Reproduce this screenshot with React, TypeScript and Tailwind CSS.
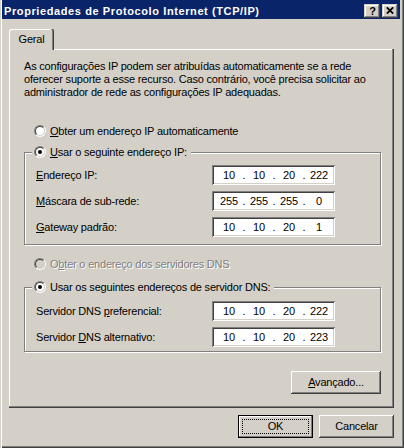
import React, { Fragment } from "react";

function Radio({ checked, disabled }: { checked?: boolean; disabled?: boolean }) {
  return (
    <span className="flex w-[12px] h-[12px] shrink-0 rounded-full border border-t-[#808080] border-l-[#808080] border-r-white border-b-white">
      <span
        className={
          disabled
            ? "flex items-center justify-center w-[10px] h-[10px] rounded-full border border-t-[#404040] border-l-[#404040] border-r-[#d4d0c8] border-b-[#d4d0c8] bg-[#d4d0c8]"
            : "flex items-center justify-center w-[10px] h-[10px] rounded-full border border-t-[#404040] border-l-[#404040] border-r-[#d4d0c8] border-b-[#d4d0c8] bg-white"
        }
      >
        {checked && <span className="w-[4px] h-[4px] rounded-full bg-black" />}
      </span>
    </span>
  );
}

function IpBox({ parts }: { parts: string[] }) {
  return (
    <div className="w-[123px] h-[20px] bg-white flex items-center pl-[5px] shadow-[inset_1px_1px_0_#808080,inset_-1px_-1px_0_#fff,inset_2px_2px_0_#404040,inset_-2px_-2px_0_#d4d0c8]">
      {parts.map((p, i) => (
        <Fragment key={i}>
          {i > 0 && <span className="w-[6px] text-center">.</span>}
          <span className="w-[24px] text-center">{p}</span>
        </Fragment>
      ))}
    </div>
  );
}

function Row({ label, parts }: { label: React.ReactNode; parts: string[] }) {
  return (
    <div className="flex items-center h-[20px]">
      <span className="w-[176px] whitespace-nowrap">{label}</span>
      <IpBox parts={parts} />
    </div>
  );
}

const U = ({ children }: { children: React.ReactNode }) => (
  <span className="underline underline-offset-[1px]">{children}</span>
);

export default function App() {
  return (
    <div className="w-[404px] h-[448px] bg-[#d4d0c8] flex flex-col text-[11px] leading-[13px] text-black tracking-[-0.2px] font-['Liberation_Sans',Arial,sans-serif] shadow-[inset_1px_0_0_#d4d0c8,inset_2px_0_0_#fff,inset_-1px_-1px_0_#404040,inset_-2px_-2px_0_#808080]">
      {/* Title bar */}
      <div className="ml-[2px] mr-[4px] h-[19px] bg-[#0a246a] flex items-start justify-between">
        <span className="pl-[2px] pt-[5px] text-white font-bold tracking-[0.6px] whitespace-nowrap">
          Propriedades de Protocolo Internet (TCP/IP)
        </span>
        <div className="flex gap-[2px] pt-[4px] pr-[2px]">
          <div className="w-[16px] h-[14px] bg-[#d4d0c8] flex items-center justify-center shadow-[inset_-1px_-1px_0_#404040,inset_1px_1px_0_#d4d0c8,inset_-2px_-2px_0_#808080,inset_2px_2px_0_#fff]">
            <span className="font-bold text-[11px] leading-[11px] tracking-normal pl-[1px]">?</span>
          </div>
          <div className="w-[16px] h-[14px] bg-[#d4d0c8] flex items-center justify-center shadow-[inset_-1px_-1px_0_#404040,inset_1px_1px_0_#d4d0c8,inset_-2px_-2px_0_#808080,inset_2px_2px_0_#fff]">
            <svg width="8" height="7" viewBox="0 0 8 7" className="mb-[1px]">
              <path d="M0.8 0.3 L7.2 6.7 M7.2 0.3 L0.8 6.7" stroke="#000" strokeWidth="1.7" fill="none" />
            </svg>
          </div>
        </div>
      </div>

      <div className="flex flex-col pl-[9px] pr-[10px]">
        {/* Tab */}
        <div className="mt-[10px] flex">
          <div className="relative z-10 -mb-[1px] w-[45px] h-[21px] bg-[#d4d0c8] rounded-tl-[2px] rounded-tr-[2px] flex justify-center pt-[4px] shadow-[inset_-1px_0_0_#404040,inset_-2px_0_0_#808080,inset_1px_1px_0_#fff]">
            Geral
          </div>
        </div>

        {/* Panel */}
        <div className="h-[359px] flex flex-col pl-[15px] pt-[11px] shadow-[inset_-1px_-1px_0_#404040,inset_-2px_-2px_0_#808080,inset_1px_1px_0_#fff]">
          <p className="whitespace-nowrap">
            As configurações IP podem ser atribuídas automaticamente se a rede
            <br />
            oferecer suporte a esse recurso. Caso contrário, você precisa solicitar ao
            <br />
            administrador de rede as configurações IP adequadas.
          </p>

          <div className="mt-[25px] ml-[10px] h-[14px] flex items-center gap-[4px]">
            <Radio />
            <span>
              <U>O</U>bter um endereço IP automaticamente
            </span>
          </div>

          <div className="relative mt-[14px] w-[357px] border border-[#808080] shadow-[1px_1px_0_#fff,inset_1px_1px_0_#fff] pl-[11px] pt-[12px] pb-[7px] flex flex-col gap-[6px]">
            <div className="absolute -top-[8px] left-[7px] h-[14px] bg-[#d4d0c8] flex items-center gap-[4px] pl-[2px] pr-[4px]">
              <Radio checked />
              <span>
                <U>U</U>sar o seguinte endereço IP:
              </span>
            </div>
            <Row label={<><U>E</U>ndereço IP:</>} parts={["10", "10", "20", "222"]} />
            <Row label={<><U>M</U>áscara de sub-rede:</>} parts={["255", "255", "255", "0"]} />
            <Row label={<><U>G</U>ateway padrão:</>} parts={["10", "10", "20", "1"]} />
          </div>

          <div className="mt-[12px] ml-[10px] h-[14px] flex items-center gap-[4px]">
            <Radio disabled />
            <span className="text-[#808080] [text-shadow:1px_1px_0_#fff]">
              O<U>b</U>ter o endereço dos servidores DNS
            </span>
          </div>

          <div className="relative mt-[16px] w-[357px] border border-[#808080] shadow-[1px_1px_0_#fff,inset_1px_1px_0_#fff] pl-[11px] pt-[13px] pb-[4px] flex flex-col gap-[6px]">
            <div className="absolute -top-[8px] left-[7px] h-[14px] bg-[#d4d0c8] flex items-center gap-[4px] pl-[2px] pr-[4px]">
              <Radio checked />
              <span>Usar os seguintes endereços de servidor DNS:</span>
            </div>
            <Row label={<>Servidor DNS <U>p</U>referencial:</>} parts={["10", "10", "20", "222"]} />
            <Row label={<>Servidor <U>D</U>NS alternativo:</>} parts={["10", "10", "20", "223"]} />
          </div>

          <div className="mt-[19px] w-[357px] flex justify-end">
            <div className="w-[90px] h-[23px] bg-[#d4d0c8] flex items-center justify-center shadow-[inset_-1px_-1px_0_#404040,inset_1px_1px_0_#fff,inset_-2px_-2px_0_#808080]">
              <span>
                <U>A</U>vançado...
              </span>
            </div>
          </div>
        </div>

        {/* Bottom buttons */}
        <div className="mt-[7px] flex justify-end gap-[6px]">
          <div className="relative w-[75px] h-[23px] bg-[#d4d0c8] border border-black flex items-center justify-center shadow-[inset_-1px_-1px_0_#808080,inset_1px_1px_0_#fff]">
            <span className="absolute inset-[3px] border border-dotted border-black" />
            <span>OK</span>
          </div>
          <div className="w-[75px] h-[23px] bg-[#d4d0c8] flex items-center justify-center shadow-[inset_-1px_-1px_0_#404040,inset_1px_1px_0_#fff,inset_-2px_-2px_0_#808080]">
            <span>Cancelar</span>
          </div>
        </div>
      </div>
    </div>
  );
}
